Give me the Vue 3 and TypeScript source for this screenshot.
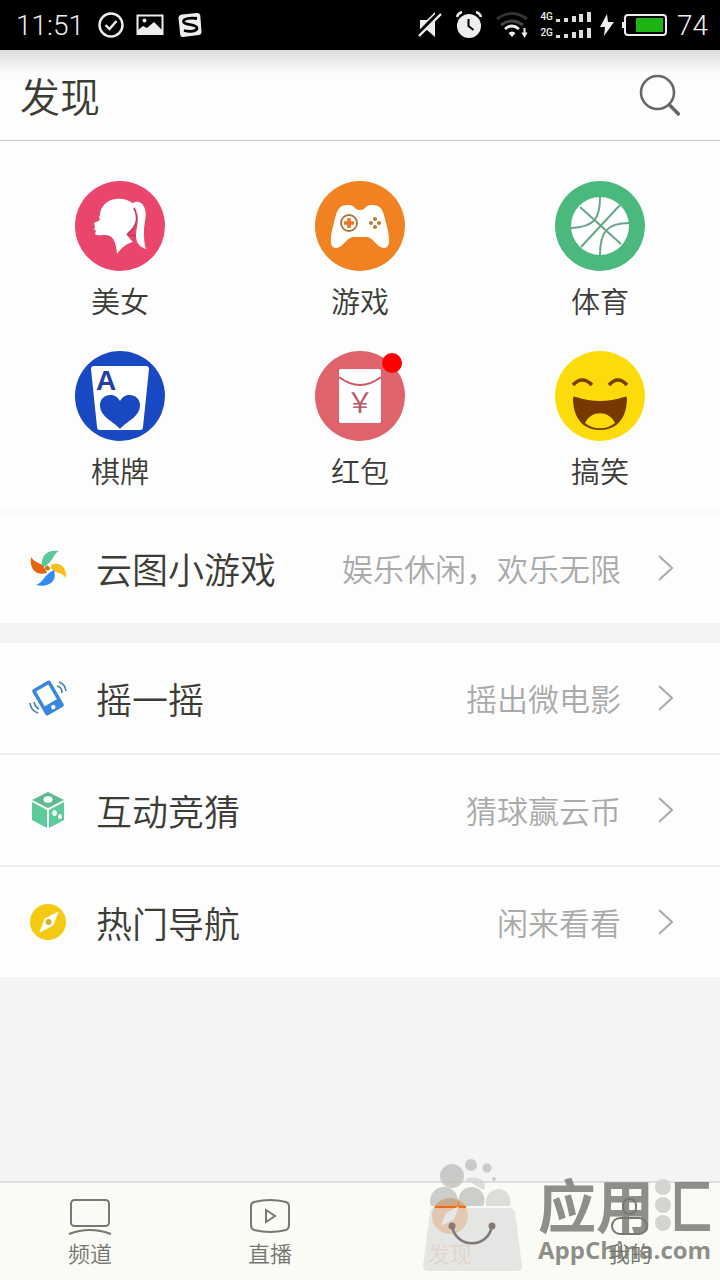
<script setup lang="ts">
interface Category { id: string; label: string; badge?: boolean }
interface Entry { id: string; title: string; hint: string }

const categories: Category[] = [
  { id: 'beauty', label: '美女' },
  { id: 'game', label: '游戏' },
  { id: 'sport', label: '体育' },
  { id: 'card', label: '棋牌' },
  { id: 'packet', label: '红包', badge: true },
  { id: 'funny', label: '搞笑' },
]

const groups: Entry[][] = [
  [{ id: 'windmill', title: '云图小游戏', hint: '娱乐休闲，欢乐无限' }],
  [
    { id: 'shake', title: '摇一摇', hint: '摇出微电影' },
    { id: 'dice', title: '互动竞猜', hint: '猜球赢云币' },
    { id: 'compass', title: '热门导航', hint: '闲来看看' },
  ],
]

const tabs = [
  { id: 'channel', label: '频道' },
  { id: 'live', label: '直播' },
  { id: 'discover', label: '发现' },
  { id: 'mine', label: '我的' },
]
</script>

<template>
  <div class="page">
    <div class="status">
      <span class="clock">11:51</span>
      <svg width="26" height="26" viewBox="0 0 26 26" fill="none" stroke="#eee" stroke-width="2.4">
        <circle cx="13" cy="13" r="11.5" /><path d="M7.5 13l4 4 7-8" />
      </svg>
      <svg class="gap-a" width="28" height="24" viewBox="0 0 28 24">
        <path d="M1.5 2.5h25v18.500h-25z" fill="none" stroke="#eee" stroke-width="2" />
        <path d="M2 21v-4l5-4 4 2 7-6 8 8v4z" fill="#eee" /><circle cx="8.500" cy="7.500" r="2" fill="#eee" />
      </svg>
      <svg class="gap-b" width="24" height="26" viewBox="0 0 24 26">
        <path d="M4 2.500L19 1q3-.3 3.300 2.500l1.200 16q.2 3-2.500 3.500L5 25q-2.500.2-2.800-2.500L.5 6Q.5 3 4 2.500z" fill="#eee" />
        <path d="M19 6.500C12 5.500 5.500 6.500 5.500 9.500c0 4 13.500 2 13.500 6.500 0 3.500-7 4-13 2.500" fill="none" stroke="#000" stroke-width="2.800" />
      </svg>
      <span class="grow"></span>
      <svg width="24" height="28" viewBox="0 0 24 28">
        <path d="M2 9h7l8-8v25l-8-7H2z" fill="#eee" /><path d="M-1 24L22 1" stroke="#000" stroke-width="4" /><path d="M1 25L23 3" stroke="#eee" stroke-width="2.400" />
      </svg>
      <svg class="gap-c" width="26" height="28" viewBox="0 0 26 28">
        <circle cx="13" cy="15" r="12" fill="#eee" /><path d="M12.500 8v7l5 4" fill="none" stroke="#000" stroke-width="2" />
        <path d="M1 6q1-4 5-5M20 1q4 1 5 5" fill="none" stroke="#eee" stroke-width="2.400" />
      </svg>
      <svg class="gap-c" width="34" height="28" viewBox="0 0 34 28" fill="none">
        <path d="M1 8q15-11 30 0" stroke="#333" stroke-width="2.800" /><path d="M5 14q11-8 22 0" stroke="#444" stroke-width="2.800" />
        <path d="M9 18q7-6 14 0" stroke="#eee" stroke-width="2.800" /><path d="M12.500 22q3.500-3 7 0L16 26zM25.500 21.500h6L28.500 27z" fill="#eee" /><path d="M28.500 17v6" stroke="#eee" stroke-width="2" />
      </svg>
      <span class="signals">
        <span v-for="net in ['4G', '2G']" :key="net" class="signal">
          <span>{{ net }}</span>
          <svg width="36" height="12" viewBox="0 0 36 12" fill="#ddd"><path d="M0 8h4v3H0zM8 7h4v4H8zM16 5h4v6h-4zM23 3h4v8h-4zM31 1h4v10h-4z" /></svg>
        </span>
      </span>
      <svg class="gap-d" width="16" height="24" viewBox="0 0 16 24"><path d="M8 1L1 14h5l-1 9 10-14H9z" fill="#eee" /></svg>
      <svg class="gap-d" width="46" height="24" viewBox="0 0 46 24">
        <rect x="3" y="2" width="41" height="20" rx="3" fill="none" stroke="#eee" stroke-width="2" /><path d="M0 9h2v6H0z" fill="#eee" />
        <path d="M14 5h27v14H14z" fill="#1db414" />
      </svg>
      <span class="level">74</span>
    </div>

    <header class="header">
      <h1>发现</h1>
      <button class="search" type="button" aria-label="搜索">
        <svg width="42" height="44" viewBox="0 0 42 44" fill="none" stroke="#666">
          <circle cx="19.500" cy="19.500" r="16.500" stroke-width="2.600" /><path d="M31 31.500l10.500 10.500" stroke-width="3.600" />
        </svg>
      </button>
    </header>

    <main>
      <nav class="categories" aria-label="分类">
        <a v-for="c in categories" :key="c.id" href="#" class="category">
          <span class="disc">
            <svg v-if="c.id === 'beauty'" width="90" height="90" viewBox="0 0 90 90">
              <circle cx="45" cy="45" r="45" fill="#ea466c" />
              <path d="M59 23C50 16 36 16 29 24c-3 3-4 7-4 10l-1 2 1 3-6 3 1 4-1 2 2 2-1 3c2 2 5 1 10 1 7 0 11 5 12 19 5-7 9-10 16-12-4-4-7-7-5-10 8-4 10-14 9-21z" fill="#fff" />
              <path d="M58 22c4-3 10-1 12 6 2 7-1 14-1 22 0 7 0 13 2 18-7-2-10-7-10-13 0-9 4-15 0-27z" fill="#fff" />
              <path d="M59 27c4 8 5 17-7 27 3-1 6 1 9 1" fill="none" stroke="#c03f60" stroke-width="1.800" />
            </svg>
            <svg v-else-if="c.id === 'game'" width="90" height="90" viewBox="0 0 90 90">
              <circle cx="45" cy="45" r="45" fill="#f18222" />
              <path d="M34 24c6 0 5 5 11 5s5-5 11-5c10 0 12 4 15 18 4 14 5 25-2 25-7 0-11-11-17-11H38c-6 0-10 11-17 11-7 0-6-11-2-25 3-14 5-18 15-18z" fill="#fff" />
              <circle cx="34" cy="42" r="8" fill="none" stroke="#a9753e" stroke-width="1.800" /><path d="M34 37v10M29 42h10" stroke="#ef7420" stroke-width="3.600" />
              <g fill="#bd7932"><circle cx="60" cy="38" r="2" /><circle cx="60" cy="46" r="2" /><circle cx="56" cy="42" r="2" /><circle cx="64" cy="42" r="2" /></g>
            </svg>
            <svg v-else-if="c.id === 'sport'" width="90" height="90" viewBox="0 0 90 90">
              <circle cx="45" cy="45" r="45" fill="#4bb87e" /><circle cx="45" cy="45" r="29" fill="#fff" />
              <path d="M25 26l41 37M65 24L26 66M45 16c0 20-4 30-29 31M45 74c0-23 7-32 29-32" fill="none" stroke="#69a587" stroke-width="2" />
            </svg>
            <svg v-else-if="c.id === 'card'" width="90" height="90" viewBox="0 0 90 90">
              <circle cx="45" cy="45" r="45" fill="#1949c2" /><path d="M19 15h52q3 0 3 3l-6 58q0 3-3 3H25q-3 0-3-3l-6-58q0-3 3-3z" fill="#fff" />
              <text x="21" y="39" class="ace">A</text>
              <path d="M45 78C38 70 25 66 25 54c0-11 15-14 20-4 5-10 20-7 20 4 0 12-13 16-20 24z" fill="#1949c2" />
            </svg>
            <svg v-else-if="c.id === 'packet'" width="90" height="90" viewBox="0 0 90 90">
              <circle cx="45" cy="45" r="45" fill="#df636d" /><rect x="24" y="18" width="42" height="54" rx="2" fill="#fff" />
              <path d="M24 26q21 16 42 0" fill="none" stroke="#cc5963" stroke-width="2" />
              <text x="45" y="62" text-anchor="middle" class="yen">￥</text>
            </svg>
            <svg v-else width="90" height="90" viewBox="0 0 90 90">
              <circle cx="45" cy="45" r="45" fill="#fbdc0a" />
              <path d="M18 34q9-10 19 0M54 34q9-10 18 0" fill="none" stroke="#7a3d05" stroke-width="3.600" />
              <path d="M18 47q0-2 3-1 24 8 48 0 3-1 3 1c0 20-10 32-27 32S18 67 18 47z" fill="#793802" />
              <path d="M30 72c6-13 24-13 30 0-8 7-22 7-30 0z" fill="#fbdc0a" />
            </svg>
            <i v-if="c.badge" class="badge"></i>
          </span>
          <span class="category-label">{{ c.label }}</span>
        </a>
      </nav>

      <section v-for="(group, g) in groups" :key="g" class="group">
        <a v-for="e in group" :key="e.id" href="#" class="entry">
          <svg v-if="e.id === 'windmill'" width="38" height="38" viewBox="0 0 38 38">
            <path d="M13 19C11 8 17 0 30 2c-7 4-4 10-17 17z" fill="#5ac89d" /><path d="M19 17c11-6 19 0 18 12-5-7-10-3-18-12z" fill="#fbbd20" />
            <path d="M25 21c3 10-3 18-18 15 9-4 7-10 18-15z" fill="#328cf0" /><path d="M18 24C8 27 0 21 2 8c5 8 11 3 16 16z" fill="#e56414" />
            <circle cx="18.500" cy="19" r="2.500" fill="#c9751b" /><circle cx="21" cy="17" r="1.500" fill="#fff" />
          </svg>
          <svg v-else-if="e.id === 'shake'" width="38" height="38" viewBox="0 0 38 38">
            <g transform="rotate(-30 19 19)"><rect x="8.500" y="4" width="21" height="30" rx="2" fill="#3788dc" /><path d="M12 7.500h14v17H12z" fill="#fff" /><circle cx="19" cy="29.500" r="2.200" fill="#fff" /></g>
            <g fill="none" stroke="#477da8" stroke-width="1.600"><path d="M28 7q5 1 5 7M30 3q6 2 7 9M5 23q1 5 5 7M1 24q1 8 8 10" /></g>
          </svg>
          <svg v-else-if="e.id === 'dice'" width="38" height="38" viewBox="0 0 38 38">
            <path d="M19 1L35 9 19 17 3 9z" fill="#5cbb90" /><path d="M3 11l15 8v18L3 29zM20 19l15-8v18l-15 8z" fill="#5dca9a" />
            <ellipse cx="19" cy="8.500" rx="4.500" ry="3.300" fill="#fff" /><ellipse cx="25.500" cy="22" rx="2.300" ry="3" fill="#fff" /><ellipse cx="31" cy="25.500" rx="2" ry="2.500" fill="#fff" />
          </svg>
          <svg v-else width="38" height="38" viewBox="0 0 38 38">
            <circle cx="19" cy="19" r="18" fill="#f5ca12" /><path d="M29 9l-5 13-13 7 5-13z" fill="#fff" stroke="#fff" /><circle cx="19.500" cy="19" r="3" fill="#d3b22b" />
          </svg>
          <span class="entry-title">{{ e.title }}</span>
          <span class="entry-hint">{{ e.hint }}</span>
          <svg width="18" height="26" viewBox="0 0 18 26" fill="none" stroke="#aaa" stroke-width="2"><path d="M2 1l13 12L2 25" /></svg>
        </a>
      </section>
    </main>

    <footer class="footer">
      <nav class="tabs" aria-label="主导航">
        <a v-for="t in tabs" :key="t.id" href="#" class="tab" :class="{ active: t.id === 'discover' }">
          <svg width="44" height="38" viewBox="0 0 44 38" fill="none" stroke="#777970" stroke-width="2">
            <template v-if="t.id === 'channel'"><rect x="3" y="2" width="38" height="26" rx="3.500" /><path d="M1 36q21-8 42 0" /></template>
            <template v-else-if="t.id === 'live'"><path d="M6 4q16-4 32 0 3 1 3 4v19q0 4-3 5-16 4-32 0-3-1-3-5V8q0-3 3-4z" /><path d="M18 12v12l9-6z" /></template>
            <template v-else-if="t.id === 'discover'"><circle cx="22" cy="18" r="18" fill="#ee8530" stroke="none" /><path d="M7 9h31" stroke="#ff6a00" stroke-width="3" /><path d="M31 8l-5 13-13 7 5-13z" fill="#fff" stroke="none" /></template>
            <template v-else><rect x="15" y="1" width="13" height="15" rx="6" /><rect x="4" y="20" width="35" height="16" rx="8" /></template>
          </svg>
          <span>{{ t.label }}</span>
        </a>
      </nav>
      <div class="watermark">
        <svg width="102" height="114" viewBox="0 0 102 114">
          <g fill="#b9bbb8" opacity=".7">
            <circle cx="30" cy="18" r="12" /><circle cx="49" cy="7" r="6" /><circle cx="65" cy="10" r="4.500" /><circle cx="72" cy="21" r="2" /><path d="M43 22q6-4 12-2 8 2 8 9l-1 3-6-3q-7-5-13-7z" fill="#d0d2cf" />
            <path d="M9 48a14 14 0 1 1 26 0z" /><path d="M38 48a13 13 0 1 1 23 0z" /><path d="M64 48c-2-11 6-17 13-17 8 0 13 9 11 17z" fill="#d0d2cf" />
          </g>
          <path d="M12 50h76q4 0 5 4l7 54q0 5-5 5H6q-5 0-5-5l7-54q1-4 4-4z" fill="#dedfde" fill-opacity=".75" />
          <g fill="#8a7874"><circle cx="30" cy="68" r="3.500" /><circle cx="70" cy="68" r="3.500" /></g><path d="M30 68c4 23 36 23 40 0" fill="none" stroke="#81787a" stroke-width="2.600" />
        </svg>
        <div class="brand">
          <div class="brand-name">应用<span class="brand-end"><span class="clipped">汇</span><i class="dots"><b></b><b></b><b></b></i></span></div>
          <div class="brand-site">AppChina.com</div>
        </div>
      </div>
    </footer>
  </div>
</template>

<style>
body { margin: 0; background: #f4f4f4; }
</style>

<style scoped>
.page { min-height: 100vh; display: flex; flex-direction: column; background: #f4f4f4; color: #3c3c37; font-family: "Noto Sans CJK SC", sans-serif; font-weight: 350; }
a { color: inherit; text-decoration: none; }
svg { display: block; flex: none; }
.status { height: 50px; box-sizing: border-box; padding: 0 12px 0 16px; display: flex; align-items: center; background: #000; color: #eee; font-family: Roboto, sans-serif; font-size: 28px; }
.clock { margin-right: 14px; }
.gap-a { margin-left: 12px; }
.gap-b { margin-left: 14px; }
.gap-c { margin-left: 14px; }
.gap-d { margin-left: 7px; }
.grow { flex: 1; }
.signals { margin-left: 10px; display: flex; flex-direction: column; gap: 4px; }
.signal { display: flex; align-items: center; gap: 3px; font-size: 10px; line-height: 12px; font-weight: 500; }
.level { margin-left: 9px; }
.header { height: 90px; padding: 0 40px 0 20px; display: flex; align-items: center; justify-content: space-between; border-bottom: 1px solid #ccc; background: linear-gradient(#dcdcdc, #fdfdfd 24px); }
h1 { margin: 0; font-size: 40px; line-height: 60px; font-weight: 350; }
.search { padding: 0; border: 0; background: none; }
.categories { display: grid; grid-template-columns: repeat(3, 1fr); row-gap: 30px; padding: 40px 0 20px; background: #fdfdfd; border-bottom: 2px solid #f8f8f8; }
.category { display: flex; flex-direction: column; align-items: center; }
.disc { position: relative; }
.badge { position: absolute; top: 2px; right: 3px; width: 20px; height: 20px; border-radius: 50%; background: #f00; }
.category-label { margin-top: 8px; font-size: 29px; line-height: 42px; }
.ace { font: 700 28px "Liberation Sans", sans-serif; fill: #263e9f; }
.yen { font: 400 28px "Noto Sans CJK SC", sans-serif; fill: #b85c69; }
.group { background: #fdfdfd; }
.group + .group { margin-top: 20px; }
.entry { height: 110px; padding: 0 45px 0 29px; display: flex; align-items: center; }
.entry + .entry { border-top: 2px solid #eee; }
.entry-title { flex: 1; margin-left: 29px; font-size: 36px; line-height: 52px; }
.entry-hint { margin-right: 36px; font-size: 31px; line-height: 46px; color: #aaa; }
.footer { position: relative; margin-top: auto; }
.tabs { height: 97px; display: grid; grid-template-columns: repeat(4, 1fr); border-top: 2px solid #ddd; background: #fafbf5; }
.tab { display: flex; flex-direction: column; align-items: center; padding-top: 15px; font-size: 22px; line-height: 32px; color: #74766e; }
.active span { color: #eab080; }
.watermark { position: absolute; right: 8px; bottom: 8px; display: flex; align-items: flex-end; gap: 14px; pointer-events: none; }
.brand { color: rgba(116, 119, 112, .82); padding-bottom: 9px; }
.brand-name { margin-bottom: 4px; font-size: 58px; line-height: 60px; font-weight: 700; white-space: nowrap; }
.brand-end { position: relative; display: inline-block; }
.clipped { display: inline-block; clip-path: inset(0 0 0 36%); }
.dots { position: absolute; left: 1px; top: 6px; display: flex; flex-direction: column; gap: 2px; }
.dots b { width: 16px; height: 16px; border-radius: 50%; background: #d4d5d0; }
.brand-site { font: 700 24px/26px "Open Sans", sans-serif; }
</style>
